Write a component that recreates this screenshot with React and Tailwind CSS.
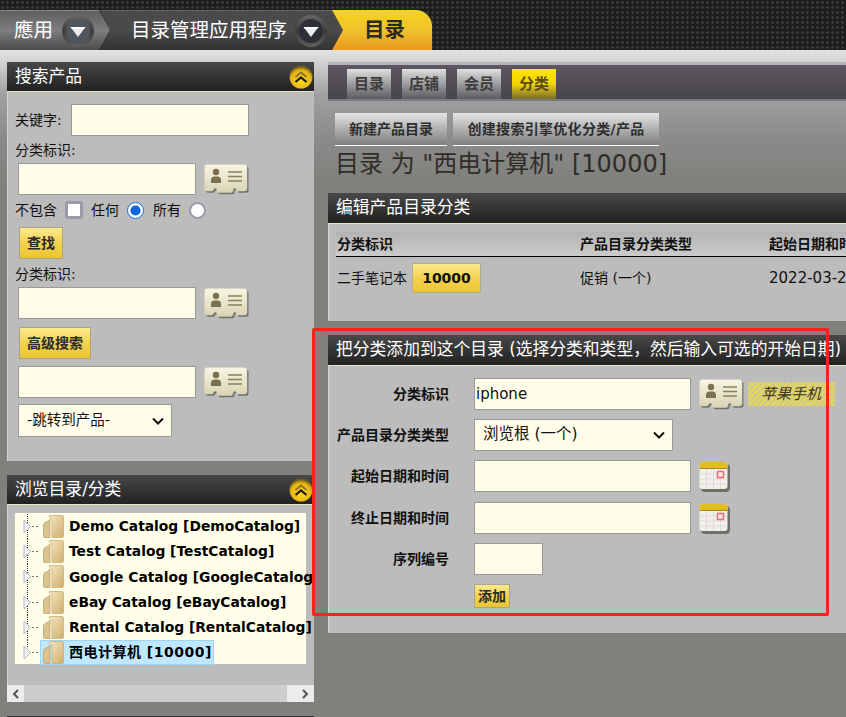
import React from 'react'

const CJK = 'font-["DejaVu_Sans","Noto_Sans_CJK_SC",sans-serif]'
const INPUT = 'block bg-[#fffce9] border border-[#9a9a9a] shrink-0 px-px outline-none'
const GOLD = 'bg-linear-to-b from-[#fbe98e] via-[#f2d24e] to-[#ecc530] border border-[#a8a48c] font-bold text-[#2b2b2b] text-[14px]'

const TREE = [
  'Demo Catalog [DemoCatalog]',
  'Test Catalog [TestCatalog]',
  'Google Catalog [GoogleCatalog]',
  'eBay Catalog [eBayCatalog]',
  'Rental Catalog [RentalCatalog]',
]

function DownBall({ dark }) {
  return (
    <svg width="34" height="34" viewBox="0 0 34 34" className="shrink-0">
      <defs>
        <linearGradient id="ball" x1="0" y1="0" x2="0" y2="1">
          <stop offset="0" stopColor="#666" />
          <stop offset="0.5" stopColor="#3c3c3c" />
          <stop offset="1" stopColor="#5e5e5e" />
        </linearGradient>
      </defs>
      <circle cx="17" cy="17" r="16" fill="url(#ball)" />
      <circle cx="17" cy="17" r="12" fill={dark ? '#2c3036' : '#50565e'} />
      <path d="M9.500 13 H24.500 L17 23 Z" fill="#ececec" />
      <path d="M9.500 13 H24.500 L23 15 H11 Z" fill="#fff" />
    </svg>
  )
}

function CollapseBall() {
  return (
    <svg width="24" height="24" viewBox="0 0 24 24" className="shrink-0">
      <defs>
        <radialGradient id="gold" cx="0.5" cy="0.65" r="0.6">
          <stop offset="0" stopColor="#ffd91e" />
          <stop offset="0.75" stopColor="#e6b412" />
          <stop offset="1" stopColor="#6e5a1e" />
        </radialGradient>
      </defs>
      <circle cx="12" cy="12" r="11.500" fill="url(#gold)" />
      <path d="M6.500 12 L12 7.500 L17.500 12" fill="none" stroke="#8a7430" strokeWidth="2" />
      <path d="M6.500 17 L12 12.500 L17.500 17" fill="none" stroke="#1c1c10" strokeWidth="2.200" />
    </svg>
  )
}

function CardIcon() {
  const shape = 'M3 0.500 H40 Q43 0.500 43 3.500 V24.500 Q43 27 40.500 27 H34 Q32.500 27 32.500 25.500 Q32 24 30.500 24 Q29 24 29 26 Q29 28.500 27 28.500 H15 Q13 28.500 13 26 Q13 24 11.500 24 Q10 24 9.500 25.500 Q9 27 7.500 27 H3 Q0.500 27 0.500 24.500 V3.500 Q0.500 0.500 3 0.500 Z'
  return (
    <svg width="45" height="31" viewBox="0 0 45 31" className="shrink-0">
      <defs>
        <linearGradient id="card" x1="0" y1="0" x2="0" y2="1">
          <stop offset="0" stopColor="#f8f6e4" />
          <stop offset="1" stopColor="#d8d4b2" />
        </linearGradient>
      </defs>
      <path d={shape} fill="#5c5c56" opacity="0.8" transform="translate(1.500 1.800)" />
      <path d={shape} fill="url(#card)" stroke="#d5d2b8" strokeWidth="0.500" />
      <circle cx="12" cy="8" r="3.200" fill="#7b7150" />
      <path d="M7 19 V16 Q7 12.500 10.500 12.500 H13.500 Q17 12.500 17 16 V19 Z" fill="#7b7150" />
      <path d="M24 8 H38 M24 12.500 H38 M24 17 H38" stroke="#86805f" strokeWidth="1.700" />
    </svg>
  )
}

function CalIcon() {
  return (
    <svg width="31" height="31" viewBox="0 0 31 31" className="shrink-0">
      <rect x="2" y="3" width="29" height="28" rx="4" fill="#55554f" opacity="0.75" />
      <rect x="0.500" y="1" width="28" height="27" rx="3" fill="#f2f0e8" />
      <path d="M0.500 7 V4 Q0.500 1 3.500 1 H25.500 Q28.500 1 28.500 4 V7 Z" fill="#e2bd22" />
      <path d="M0.500 7.500 H28.500" stroke="#a58a20" strokeWidth="1" />
      <path d="M7.500 8 V28 M14.500 8 V28 M21.500 8 V28 M1 13 H28 M1 18 H28 M1 23 H28" stroke="#dcdcd8" strokeWidth="1" />
      <rect x="18.500" y="10.500" width="6" height="6" fill="#f6e6e6" stroke="#ee6a72" strokeWidth="1.500" />
    </svg>
  )
}

function FolderIcon() {
  return (
    <svg width="21" height="23" viewBox="0 0 21 23" className="shrink-0">
      <defs>
        <linearGradient id="fold" x1="0" y1="0" x2="1" y2="1">
          <stop offset="0" stopColor="#f6e8c4" />
          <stop offset="1" stopColor="#cfae6c" />
        </linearGradient>
      </defs>
      <path d="M6 1.500 Q6 0.500 7 0.500 H19 Q20.500 0.500 20.500 2 V21 Q20.500 22.500 19 22.500 H9 V4 Z" fill="url(#fold)" stroke="#c9b07a" strokeWidth="0.800" />
      <path d="M3 7 Q6 6 7 4 V22.500 H2 Q0.500 22.500 0.500 21 V10 Q0.500 8 3 7 Z" fill="#dcc48e" stroke="#bda26c" strokeWidth="0.800" />
    </svg>
  )
}

function TreeJoint({ last }) {
  return (
    <svg width="18" height="25" viewBox="0 0 18 25" className="shrink-0">
      <path d={last ? 'M4.500 0 V8' : 'M4.500 0 V25'} stroke="#333" strokeWidth="1" strokeDasharray="1 1" />
      <path d="M1 6 L7.500 12.500 L1 19 Z" fill="#f4f4f8" stroke="#b4b4c4" strokeWidth="1" />
      <path d="M9 12.500 H16" stroke="#777" strokeWidth="1" strokeDasharray="2 2" />
    </svg>
  )
}

function Select({ className, textClass, label }) {
  return (
    <div className={`relative ${className}`}>
      <select className={`block appearance-none w-full h-full pl-2 bg-[#fffce9] border border-[#9a9a9a] ${textClass}`}>
        <option>{label}</option>
      </select>
      <svg width="12" height="8" viewBox="0 0 12 8" className="absolute right-[8px] top-1/2 -translate-y-1/2 pointer-events-none">
        <path d="M1 1.500 L6 6.500 L11 1.500" fill="none" stroke="#111" strokeWidth="2" />
      </svg>
    </div>
  )
}

function Panel({ title, ball, className, headClass, bodyClass, children }) {
  return (
    <section className={className}>
      <div className={`flex items-center justify-between pl-2 pr-px bg-linear-to-b from-[#484848] to-[#222] border-b border-[#e6e4cc] text-white text-[16.800px] whitespace-nowrap ${headClass}`}>
        <span>{title}</span>
        {ball && <CollapseBall />}
      </div>
      <div className={`bg-[#bcbcbc] shadow-[inset_1px_0_0_#d4d4d4] ${bodyClass}`}>{children}</div>
    </section>
  )
}

export default function App() {
  return (
    <div className={`relative w-[846px] h-[717px] overflow-hidden bg-[#80807c] text-[#111] text-[14px] ${CJK}`}>
      <header className="h-[50px] pt-[10px] bg-[#1d1d1d] bg-[radial-gradient(circle,#3c3c3c_1px,transparent_1.6px)] bg-size-[5px_5px]">
        <nav className="flex h-10">
          <div className="w-[110px] flex items-center gap-[8px] pl-[14px] bg-linear-to-b from-[#5f5f5f] via-[#7e7e7e] to-[#4c4c4c] border-t border-[#8a8a8a] text-white text-[19.500px] [clip-path:polygon(0_0,99px_0,100%_50%,99px_100%,0_100%)]">
            <span>應用</span>
            <DownBall />
          </div>
          <div className="w-[243px] -ml-[10px] flex items-center gap-[7px] pl-[31px] bg-linear-to-b from-[#4a4a4a] via-[#4a4a4a] to-[#333] border-t border-[#666] text-white text-[19.500px] [clip-path:polygon(0_0,232px_0,100%_50%,232px_100%,0_100%,10px_50%)]">
            <span className="whitespace-nowrap">目录管理应用程序</span>
            <DownBall dark />
          </div>
          <div className="w-[100px] -ml-[11px] flex items-center pl-[32px] rounded-tr-[16px] bg-linear-to-b from-[#f4d41e] via-[#f0c22c] to-[#e8981c] text-[#2a2a20] text-[20.500px] font-bold [clip-path:polygon(0_0,100%_0,100%_100%,0_100%,11px_50%)]">
            目录
          </div>
        </nav>
      </header>

      <main className="flex items-start pl-[7px] pt-3 h-[667px] bg-[linear-gradient(to_bottom,#e4e4e4_0px,#a0a0a0_45px,#8a8a8a_90px,#80807c_130px)]">
        <div className="w-[307px] shrink-0">
          <Panel title="搜索产品" ball headClass="h-[30px]" bodyClass="h-[369px] pt-3">
            <div className="flex items-center pl-2">
              <span className="w-[56px]">关键字:</span>
              <input className={`${INPUT} w-[178px] h-[32px]`} />
            </div>
            <div className="pl-2 mt-[4px] h-[22px] leading-[20px]">分类标识:</div>
            <div className="flex items-center gap-2 pl-[11px] mt-px">
              <input className={`${INPUT} w-[178px] h-[32px]`} />
              <CardIcon />
            </div>
            <div className="flex items-center pl-2 mt-[6px] h-[18px]">
              <span>不包含</span>
              <input type="checkbox" className="appearance-none ml-2 w-[18px] h-[18px] bg-white border-[3px] border-[#9a9aa8] rounded-[3px]" />
              <span className="ml-2">任何</span>
              <input type="radio" name="cond" defaultChecked className="ml-2 w-[17px] h-[17px] m-0 accent-[#0b66dc]" />
              <span className="ml-[9px]">所有</span>
              <input type="radio" name="cond" className="appearance-none ml-2 w-[17px] h-[17px] bg-white border-2 border-[#9a9aa8] rounded-full" />
            </div>
            <button className={`${GOLD} block ml-[12px] mt-2 w-[44px] h-[32px]`}>查找</button>
            <div className="pl-2 mt-[5px] h-[22px] leading-[20px]">分类标识:</div>
            <div className="flex items-center gap-2 pl-[11px] mt-px">
              <input className={`${INPUT} w-[178px] h-[32px]`} />
              <CardIcon />
            </div>
            <button className={`${GOLD} block ml-[12px] mt-2 w-[72px] h-[32px]`}>高级搜索</button>
            <div className="flex items-center gap-2 pl-[11px] mt-[7px]">
              <input className={`${INPUT} w-[178px] h-[32px]`} />
              <CardIcon />
            </div>
            <Select label="-跳转到产品-" className="ml-[11px] mt-[6px] w-[154px] h-[33px]" textClass="text-[14.500px]" />
          </Panel>

          <Panel title="浏览目录/分类" ball className="mt-[14px]" headClass="h-[30px]" bodyClass="relative h-[197px] overflow-hidden pt-2">
            <div className="ml-2 w-[291px] h-[151px] pt-px bg-[#ffffe9] pl-2 text-[13.850px] font-bold text-black whitespace-nowrap">
              {TREE.map((t) => (
                <div key={t} className="flex items-center h-[25.200px]">
                  <TreeJoint />
                  <span className="ml-[2px]"><FolderIcon /></span>
                  <span className="ml-[5px]">{t}</span>
                </div>
              ))}
              <div className="flex items-center h-[25px]">
                <TreeJoint last />
                <div className="flex items-center h-[25px] -ml-px pl-[2px] w-[174px] bg-[#bfe8ff] border border-[#9cd6f2]">
                  <FolderIcon />
                  <span className="ml-[5px] text-[14px] tracking-[0.5px]">西电计算机 [10000]</span>
                </div>
              </div>
            </div>
            <div className="absolute left-0 right-0 bottom-0 h-[17px] flex justify-between bg-[#cdcdcd] text-[#555] text-[12px]">
              <span className="w-[17px] bg-[#ececec] flex items-center justify-center">
                <svg width="8" height="10" viewBox="0 0 8 10"><path d="M6 1 L2 5 L6 9" fill="none" stroke="#555" strokeWidth="2" /></svg>
              </span>
              <span className="w-[27px] bg-[#ececec] flex items-center justify-center pl-[8px]">
                <svg width="8" height="10" viewBox="0 0 8 10"><path d="M2 1 L6 5 L2 9" fill="none" stroke="#555" strokeWidth="2" /></svg>
              </span>
            </div>
          </Panel>
          <div className="mt-[14px] h-[30px] bg-[#333]" />
        </div>

        <div className="ml-[14px] w-[518px] shrink-0 overflow-hidden">
          <div className="h-[39px] flex gap-[11px] pl-[19px] pt-[4px] bg-linear-to-b from-[#5c5660] to-[#47444a] border-t-[3px] border-b-[2px] border-t-[#b8b4bc] border-b-[#7c7a80]">
            {['目录', '店铺', '会员'].map((t) => (
              <div key={t} className="w-[44px] h-[30px] flex items-center justify-center bg-linear-to-b from-[#e0e0e0] to-[#5e5c60] text-[#3c3c3c] text-[15px] font-bold">{t}</div>
            ))}
            <div className="w-[44px] h-[30px] flex items-center justify-center bg-linear-to-b from-[#ffe600] via-[#f2d400] to-[#7c6c24] text-[#5a4c10] text-[15px] font-bold">分类</div>
          </div>

          <div className="flex gap-[6px] pl-[7px] mt-[12px]">
            <div className="w-[112px] h-[33px] flex items-center justify-center bg-linear-to-b from-[#e6e6e6] to-[#7e7e7e] border-b border-white text-[#2e2e2e] text-[14px] font-bold">新建产品目录</div>
            <div className="w-[206px] h-[33px] flex items-center justify-center bg-linear-to-b from-[#e6e6e6] to-[#7e7e7e] border-b border-white text-[#2e2e2e] text-[14px] font-bold tracking-[0.3px] whitespace-nowrap">创建搜索引擎优化分类/产品</div>
          </div>

          <h1 className="pl-[7px] h-[32px] mt-[2px] text-[24px] leading-[32px] text-[#302c28] whitespace-nowrap">目录 为 "西电计算机" [10000]</h1>

          <Panel title="编辑产品目录分类" className="mt-[13px]" headClass="h-[31px]" bodyClass="h-[97px] pt-2 pl-2">
            <div className="w-[700px]">
              <div className="grid grid-cols-[243px_189px_1fr] items-center h-[25px] pl-px bg-linear-to-b from-[#b4b4b4] to-[#cbcbcb] border-b border-black text-[14px] font-bold whitespace-nowrap">
                <span>分类标识</span>
                <span>产品目录分类类型</span>
                <span>起始日期和时间</span>
              </div>
              <div className="grid grid-cols-[243px_189px_1fr] items-center mt-[6px] pl-px text-[14px]">
                <div className="flex items-center gap-[5px]">
                  <span>二手笔记本</span>
                  <button className="w-[69px] h-[30px] bg-linear-to-b from-[#fbe98e] via-[#f2d24e] to-[#ecc530] border border-[#b4ae8c] font-bold text-[14px] text-[#111]">10000</button>
                </div>
                <span>促销 (一个)</span>
                <span className="text-[15px]">2022-03-21 00:00:00</span>
              </div>
            </div>
          </Panel>

          <Panel title={'把分类添加到这个目录 (选择分类和类型\uFF0C然后输入可选的开始日期)'} className="mt-[14px]" headClass="h-[31px]" bodyClass="h-[267px] pt-3">
            <div className="grid grid-cols-[121px_1fr] gap-x-[25px] items-center text-[14px]">
              <label className="text-right font-bold">分类标识</label>
              <div className="flex items-center">
                <input defaultValue="iphone" className={`${INPUT} w-[217px] h-[32px] text-[15px]`} />
                <span className="ml-2"><CardIcon /></span>
                <span className="ml-[4px] w-[87px] h-[24px] pl-[13px] flex items-center whitespace-nowrap italic text-[15px] text-[#3a3418] bg-[repeating-linear-gradient(135deg,#e2d65c_0_2px,#cfc98c_2px_4px)]">苹果手机</span>
              </div>

              <label className="text-right font-bold mt-[9px]">产品目录分类类型</label>
              <Select label="浏览根 (一个)" className="mt-[9px] w-[199px] h-[32px]" textClass="text-[15.500px]" />

              <label className="text-right font-bold mt-[9px]">起始日期和时间</label>
              <div className="flex items-center gap-2 mt-[9px]">
                <input className={`${INPUT} w-[217px] h-[32px]`} />
                <CalIcon />
              </div>

              <label className="text-right font-bold mt-[10px]">终止日期和时间</label>
              <div className="flex items-center gap-2 mt-[10px]">
                <input className={`${INPUT} w-[217px] h-[32px]`} />
                <CalIcon />
              </div>

              <label className="text-right font-bold mt-[9px]">序列编号</label>
              <input className={`${INPUT} mt-[9px] w-[69px] h-[32px]`} />

              <span />
              <button className={`${GOLD} mt-[9px] w-[36px] h-[24px]`}>添加</button>
            </div>
          </Panel>
        </div>
      </main>

      {/* annotation drawn on the screenshot */}
      <div className="absolute left-[312px] top-[328px] w-[517px] h-[288px] border-[3px] border-[#f5241a] rounded-[2px] pointer-events-none" />
    </div>
  )
}
